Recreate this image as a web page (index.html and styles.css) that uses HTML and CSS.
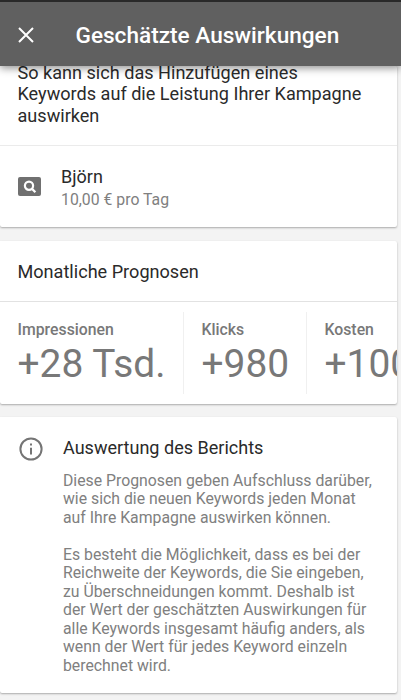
FILE: index.html
```html
<!DOCTYPE html>
<html lang="de">
<head>
<meta charset="utf-8">
<title>Geschätzte Auswirkungen</title>
<link rel="stylesheet" href="styles.css">
</head>
<body>
<header class="app-bar">
  <svg class="close" viewBox="0 0 16 16"><path d="M1 1L15 15M15 1L1 15"/></svg>
  <h1 class="title">Geschätzte Auswirkungen</h1>
</header>
<main class="content">
  <section class="card campaign">
    <p class="intro">So kann sich das Hinzufügen eines<br>Keywords auf die Leistung Ihrer Kampagne<br>auswirken</p>
    <div class="campaign-row">
      <svg class="campaign-icon" viewBox="0 0 23 19"><rect width="23" height="19" rx="2"/><circle cx="11" cy="8.7" r="4.1"/><path d="M13.8 11.6L17.4 15.2"/></svg>
      <div>
        <div class="name">Björn</div>
        <div class="budget">10,00 € pro Tag</div>
      </div>
    </div>
  </section>
  <section class="card forecast">
    <h2 class="forecast-title">Monatliche Prognosen</h2>
    <div class="metrics">
      <div class="metric first"><div class="label">Impressionen</div><div class="value">+28 Tsd.</div></div>
      <div class="metric second"><div class="label">Klicks</div><div class="value">+980</div></div>
      <div class="metric third"><div class="label">Kosten</div><div class="value">+100</div></div>
    </div>
  </section>
  <section class="card report">
    <svg class="info" viewBox="0 0 24 24"><circle cx="12" cy="12" r="10.6"/><path d="M12 10.8V17.6M12 6.4V8.6"/></svg>
    <div class="report-body">
      <h2 class="report-title">Auswertung des Berichts</h2>
      <p class="text">Diese Prognosen geben Aufschluss darüber,<br>wie sich die neuen Keywords jeden Monat<br>auf Ihre Kampagne auswirken können.</p>
      <p class="text">Es besteht die Möglichkeit, dass es bei der<br>Reichweite der Keywords, die Sie eingeben,<br>zu Überschneidungen kommt. Deshalb ist<br>der Wert der geschätzten Auswirkungen für<br>alle Keywords insgesamt häufig anders, als<br>wenn der Wert für jedes Keyword einzeln<br>berechnet wird.</p>
    </div>
  </section>
</main>
</body>
</html>
```
FILE: styles.css
```css
* { box-sizing: border-box; }
body {
  margin: 0;
  height: 700px;
  overflow: hidden;
  background: #f3f3f3;
  color: #2a2a2a;
  font-family: Roboto, sans-serif;
  white-space: nowrap;
}
h1, h2, p { margin: 0; font-weight: 400; }
.app-bar {
  position: relative;
  z-index: 1;
  display: flex;
  align-items: center;
  height: 66px;
  padding: 2px 0 0 18px;
  background: #606060;
  border-top: 2px solid #292929;
  box-shadow: 0 2px 8px rgba(0, 0, 0, .45);
}
.close { width: 16px; height: 16px; fill: none; stroke: #fff; stroke-width: 2; }
.title {
  margin-left: 41.5px;
  color: #fff;
  font-size: 22.6px;
  font-weight: 500;
}
.card {
  width: 397px;
  background: #fff;
  border-radius: 0 2px 2px 2px;
  box-shadow: 0 1px 2px rgba(0, 0, 0, .3);
  overflow: hidden;
}
.campaign { display: flex; flex-direction: column; height: 161px; }
.intro {
  flex: none;
  height: 83px;
  margin-top: -4px;
  padding-left: 17.5px;
  font-size: 18.1px;
  line-height: 21.3px;
}
.campaign-row {
  flex: 1;
  display: flex;
  border-top: 1px solid #ebebeb;
  padding: 20px 0 0 18px;
}
.campaign-icon { width: 23px; height: 19px; margin: 11px 20px 0 0; fill: none; stroke: #fff; stroke-width: 2.2; }
.campaign-icon rect { fill: #707070; stroke: none; }
.name { font-size: 18px; line-height: 21px; }
.budget { margin-top: 3px; font-size: 15.8px; line-height: 19px; color: #808080; }
.forecast { height: 163px; margin-top: 14px; }
.forecast-title {
  height: 61px;
  padding: 20px 0 0 17.5px;
  font-size: 18.1px;
  line-height: 21px;
  border-bottom: 1px solid #e2e2e2;
}
.metrics { display: flex; padding-top: 10px; color: #787878; }
.metric { flex: none; height: 82px; padding: 8px 0 0 17.5px; border-right: 1px solid #f0f0f0; }
.first { width: 184px; }
.second { width: 123px; }
.third { width: 123px; border-right: 0; }
.label { font-size: 15.8px; font-weight: 500; line-height: 19px; }
.value { font-size: 38.9px; line-height: 49px; }
.report { display: flex; height: 276px; margin-top: 13px; padding: 20px 0 0 19px; }
.info { flex: none; width: 24px; height: 24px; fill: none; stroke: #757575; stroke-width: 2; }
.report-body { margin-left: 20px; }
.report-title { font-size: 18.05px; line-height: 22px; }
.text { margin-top: 13px; font-size: 15.8px; line-height: 18.45px; color: #808080; }
.text + .text { margin-top: 18.5px; }
```
